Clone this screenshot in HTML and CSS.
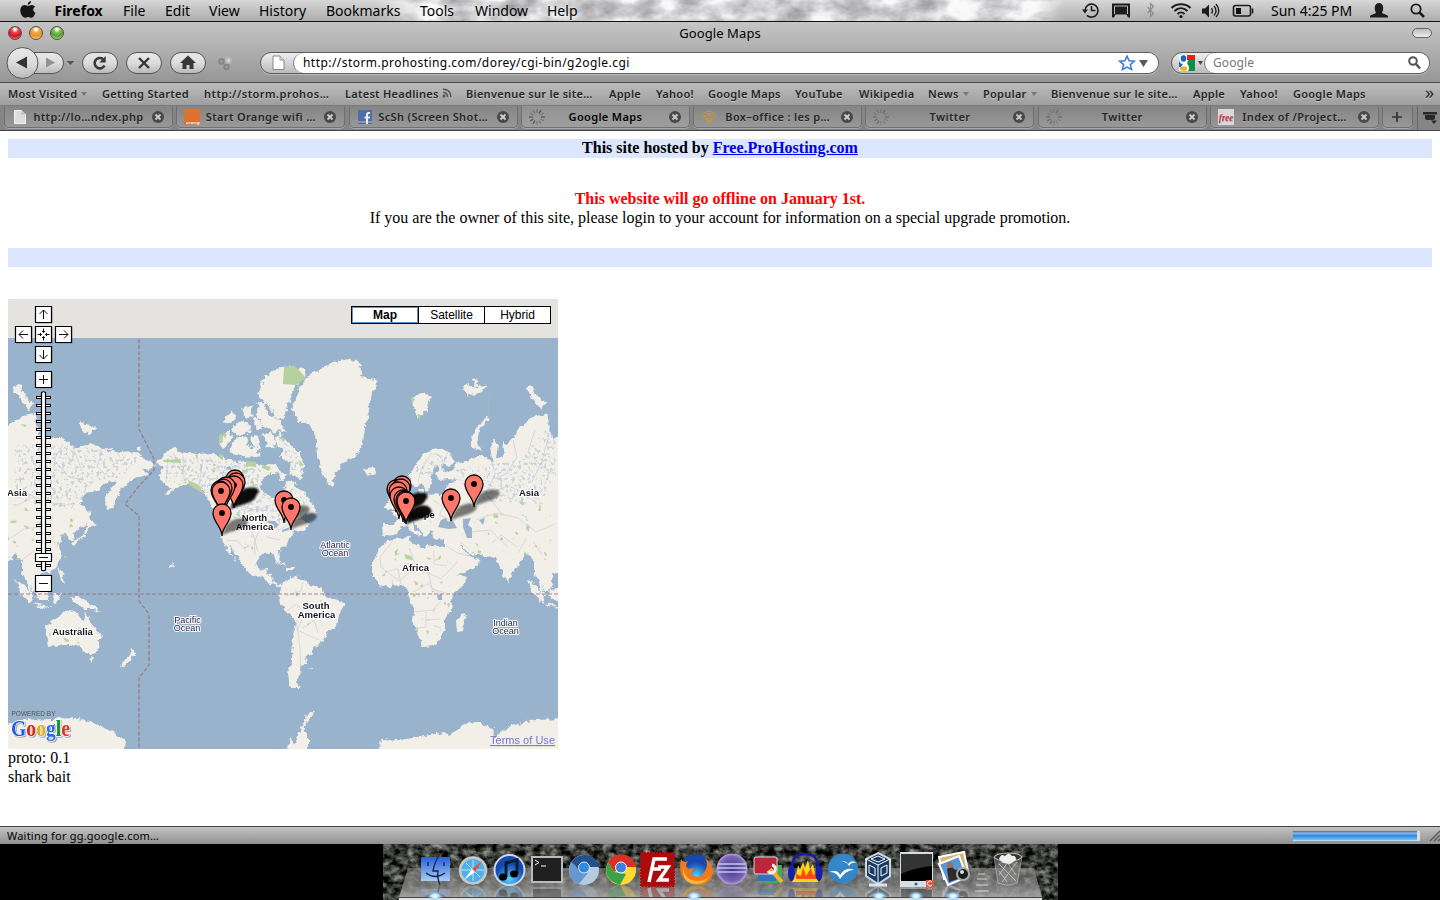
FILE: index.html
```html
<!DOCTYPE html>
<html lang="en">
<head>
<meta charset="utf-8">
<title>Google Maps</title>
<link rel="stylesheet" href="styles.css">
</head>
<body>
<header class="menubar">
  <svg class="clouds" width="690" height="21"><defs><filter id="cloud" x="0" y="0" width="100%" height="100%" color-interpolation-filters="sRGB"><feTurbulence type="fractalNoise" baseFrequency=".03 .05" numOctaves="4" seed="8"/><feColorMatrix values=".8 0 0 0 .45  .8 0 0 0 .45  .8 0 0 0 .46  0 0 0 0 1"/></filter></defs><rect width="690" height="21" filter="url(#cloud)"/></svg>
  <nav class="menus">
    <svg width="18" height="20" viewBox="0 0 18 20"><path d="M12 1c.2 2-1.500 3.800-3.300 3.700C8.500 2.900 10.200 1.200 12 1zM9 6c1 0 2-.9 3.700-.9 1.500 0 2.700.8 3.300 1.700-2.600 1.500-2.200 5 .5 6-.8 2.400-2.400 5-4 5-1.300 0-1.800-.8-3.300-.8s-2 .8-3.200.8C3.800 17.800 1 13.500 1.300 10 1.500 6.800 3.600 5.100 5.600 5.100 7.100 5.100 8.200 6 9 6z" fill="#151515"/></svg>
    <b>Firefox</b><span>File</span><span>Edit</span><span>View</span><span>History</span><span>Bookmarks</span><span>Tools</span><span>Window</span><span>Help</span>
  </nav>
  <div class="extras">
    <svg width="182" height="21" viewBox="1080 0 182 21" fill="none" stroke="#1c1c1c" stroke-width="1.600">
      <path d="M1085 10.500a6.500 6.500 0 1 1 2 4.800M1091.500 6v4.500h4"/><path d="M1082 9.500h6l-3 4z" fill="#1c1c1c" stroke="none"/>
      <path d="M1112 3.500h18v11h-18zM1112 14.500h3.500l-1.500 3h-2zM1130 14.500h-3.500l1.500 3h2z" fill="#1c1c1c" stroke="none"/><path d="M1114.500 6h13" stroke="#bbb" stroke-width="1"/><path d="M1114.500 6v8M1127.500 6v8" stroke="#bbb" stroke-width="1"/>
      <path d="M1147.500 7l6 6.500-3 3v-13l3 3-6 6.500" stroke="#8c8c8c" stroke-width="1.200"/>
      <path d="M1171.500 8c5-5 14-5 19 0M1174.500 11c4-3.600 9-3.600 13 0M1177.500 14c2-2 5-2 7 0" stroke-width="2"/><circle cx="1181" cy="16.500" r="1.600" fill="#111" stroke="none"/>
      <path d="M1202 8.500h3l4-4v13l-4-4h-3z" fill="#1c1c1c" stroke="none"/><path d="M1211.500 8q2 3 0 5.500M1214 6q4 5 0 9.500M1216 4q5.500 7 0 13" stroke-width="1.300"/>
      <rect x="1233.500" y="5.500" width="17" height="10.500" rx="2"/><path d="M1236 8h5v6h-5z" fill="#111" stroke="none"/><path d="M1252.500 8.500v5"/>
    </svg>
    <span class="clock">Sun 4:25 PM</span>
    <svg width="60" height="21" viewBox="0 0 60 21"><path d="M5 16.500c0-2 5-2 6-4C9 10 9 3 14 3s5 7 3 9.500c1 2 6 2 6 4v1H5z" fill="#1c1c1c"/><circle cx="51" cy="9" r="4.700" fill="none" stroke="#1c1c1c" stroke-width="1.800"/><path d="M54.500 12.500l4.500 4.500" stroke="#1c1c1c" stroke-width="2.500"/></svg>
  </div>
</header>

<section class="chrome">
  <div class="titlebar">
    <div class="lights"><i class="red"></i><i class="amber"></i><i class="green"></i></div>
    <span>Google Maps</span><i class="pill"></i>
  </div>
  <div class="toolbar">
    <svg class="nav" width="260" height="36" viewBox="0 45 260 36">
      <defs><linearGradient id="btn" x2="0" y2="1"><stop stop-color="#e8e8e8"/><stop offset=".5" stop-color="#dcdcdc"/><stop offset="1" stop-color="#b8b8b8"/></linearGradient></defs>
      <g fill="url(#btn)" stroke="#555"><path d="M32 52.500h21a10.500 10.500 0 0 1 0 21H32z"/><circle cx="22.500" cy="63" r="15.500"/><rect x="82.500" y="52.500" width="35" height="21" rx="10.500"/><rect x="126.500" y="52.500" width="35" height="21" rx="10.500"/><rect x="170.500" y="52.500" width="35" height="21" rx="10.500"/></g>
      <path d="M16 62.500l11-6v12z" fill="#333"/><path d="M46 57.500l9 5-9 5z" fill="#919191"/><path d="M66.500 61h8l-4 4z" fill="#575757"/>
      <path d="M104.500 65.500a5.200 5.200 0 1 1-1.500-6.500" fill="none" stroke="#383838" stroke-width="2.600"/><path d="M105.700 56v6.500h-6.500z" fill="#383838"/>
      <path d="M139 58l10 10M149 58l-10 10" stroke="#383838" stroke-width="2.400"/>
      <path d="M188 55.500l8 7.500h-2.500v6h-4v-4h-3v4h-4v-6H180z" fill="#383838"/>
      <g fill="none" stroke="#858585" stroke-width="2"><circle cx="221.500" cy="61.500" r="2.200"/><circle cx="226.500" cy="67" r="2.200"/><circle cx="228.500" cy="60.500" r="2.400" fill="#ddd" stroke="#b8b8b8"/></g>
    </svg>
    <div class="address"><svg class="page-icon" width="32" height="20"><path d="M12 3h7l4 4v9.500H12z" fill="#fff" stroke="#888"/><path d="M19 3v4h4" fill="#ddd" stroke="#999"/></svg>
      <div class="field"><span>http://storm.prohosting.com/dorey/cgi-bin/g2ogle.cgi</span><svg width="36" height="20"><path d="M9 3l2.100 4.700 5.200.5-3.900 3.400 1.200 5L9 14l-4.600 2.600 1.200-5L1.700 8.200l5.200-.5z" fill="#f5faff" stroke="#3b78d8" stroke-width="1.500"/><path d="M21 7h9l-4.500 7z" fill="#585858"/></svg></div></div>
    <div class="search"><svg width="32" height="20"><rect x="7" y="2" width="16" height="16" rx="1" fill="#fff"/><path d="M15 2h8v5h-8z" fill="#ee1c1c"/><path d="M16.500 7H23v11h-7c2-3 1-5 0-6s-1-3 .5-5z" fill="#099044"/><path d="M7 7q1 4 4 4l-2 3H7z" fill="#1768c5"/><ellipse cx="11.500" cy="5.500" rx="2.800" ry="3.300" fill="#1768c5"/><ellipse cx="11.500" cy="15.500" rx="3.700" ry="2.300" fill="#f2b31a"/><path d="M26 8h5l-2.500 4z" fill="#444"/></svg>
      <div class="field"><span>Google</span><svg width="18" height="20"><circle cx="7" cy="8" r="3.800" fill="none" stroke="#555" stroke-width="2"/><path d="M10 11l4 4.500" stroke="#555" stroke-width="2.500"/></svg></div></div>
  </div>
  <nav class="bookmarks">
    <span>Most Visited<i class="caret"></i></span><span>Getting Started</span><span class="wide">http://storm.prohos…</span><span>Latest Headlines <svg width="10" height="10" fill="none" stroke="#555" stroke-width="1.500"><circle cx="2" cy="8" r=".8"/><path d="M1 4.500q4.500 0 4.500 4.500M1 1.200q7.800 0 7.800 7.800"/></svg></span><span>Bienvenue sur le site…</span><span>Apple</span><span>Yahoo!</span><span>Google Maps</span><span>YouTube</span><span>Wikipedia</span><span>News<i class="caret"></i></span><span>Popular<i class="caret"></i></span><span>Bienvenue sur le site…</span><span>Apple</span><span>Yahoo!</span><span>Google Maps</span><span class="more">»</span>
  </nav>
  <svg width="0" height="0" class="defs"><defs>
    <symbol id="close" viewBox="0 0 12 12"><circle cx="6" cy="6" r="6" fill="#484848"/><path d="M3.500 3.500l5 5M8.500 3.500l-5 5" stroke="#ccc" stroke-width="1.900"/></symbol>
    <symbol id="spin" viewBox="-8 -8 16 16"><g stroke="#555" stroke-width="1.300"><path d="M0-4v-4M0 4v4" opacity=".5"/><path d="M4 0h4M-4 0h-4" opacity=".8"/><path d="M2-3.500l2-3.400M-2 3.500l-2 3.400M-3.500 2l-3.400 2" /><path d="M3.500-2l3.400-2M3.500 2l3.400 2M2 3.500l2 3.400M-2-3.500l-2-3.400M-3.500-2l-3.400-2" opacity=".5"/></g></symbol>
  </defs></svg>
  <nav class="tabs">
    <div class="tab"><svg class="fav" viewBox="0 0 16 16"><path d="M2.500 1.500h7l4 4v9h-11z" fill="#ddd" stroke="#f2f2f2"/><path d="M9.500 1.500v4h4" fill="#bbb"/></svg><span>http://lo…ndex.php</span><svg class="x"><use href="#close"/></svg></div>
    <div class="tab"><svg class="fav" viewBox="0 0 16 16"><path d="M0 0h16v16H0z" fill="#db7230"/><text x="2" y="14.500" font-size="4" fill="#fff">orange</text></svg><span>Start Orange wifi …</span><svg class="x"><use href="#close"/></svg></div>
    <div class="tab"><svg class="fav" viewBox="0 0 16 16"><path d="M1 1h14v14H1z" fill="#526da4"/><path d="M1 12h14v2H1z" fill="#8397c0"/><path d="M13 4h-1.500q-1.500 0-1.500 2v9M7.500 8.500H13" stroke="#eee" stroke-width="2" fill="none"/></svg><span>ScSh (Screen Shot…</span><svg class="x"><use href="#close"/></svg></div>
    <div class="tab active"><svg class="fav"><use href="#spin"/></svg><span>Google Maps</span><svg class="x"><use href="#close"/></svg></div>
    <div class="tab"><svg class="fav" viewBox="0 0 16 16" fill="none" stroke="#c59543"><ellipse cx="8" cy="7" rx="7" ry="4.500"/><ellipse cx="8" cy="7" rx="4.500" ry="2.500"/><path d="M6 7q2-2 4 0M5 10q3 1 2 4 4-2 3-4" stroke-width="1.500"/></svg><span>Box–office : les p…</span><svg class="x"><use href="#close"/></svg></div>
    <div class="tab"><svg class="fav dim"><use href="#spin"/></svg><span>Twitter</span><svg class="x"><use href="#close"/></svg></div>
    <div class="tab"><svg class="fav dim"><use href="#spin"/></svg><span>Twitter</span><svg class="x"><use href="#close"/></svg></div>
    <div class="tab"><svg class="fav" viewBox="0 0 16 16"><path d="M0 0h16v16H0z" fill="#d8d8d8"/><text class="free" x="1" y="11.500" textLength="14" lengthAdjust="spacingAndGlyphs">free</text></svg><span>Index of /Project…</span><svg class="x"><use href="#close"/></svg></div>
    <div class="tab plus"><svg width="12" height="12"><path d="M6 1v10M1 6h10" stroke="#333" stroke-width="1.700"/></svg></div>
    <div class="all"><svg width="16" height="14"><path d="M1 1h14v2.500H1zM3 4h10v4l-2 1H5l-2-1z" fill="#292929"/><path d="M9 9.500h6l-3 3.500z" fill="#292929"/></svg></div>
  </nav>
</section>

<main class="page">
  <div class="band"><b>This site hosted by <a>Free.ProHosting.com</a></b></div>
  <div class="notice"><b>This website will go offline on January 1st.</b><br>If you are the owner of this site, please login to your account for information on a special upgrade promotion.</div>
  <div class="band"></div>
  <div class="mapbox">
  <svg class="map" width="550" height="450" viewBox="8 299 550 450">
    <defs>
      <filter id="coast" filterUnits="userSpaceOnUse" x="-20" y="330" width="720" height="430"><feTurbulence type="fractalNoise" baseFrequency=".18" numOctaves="3" seed="4"/><feDisplacementMap in="SourceGraphic" scale="6" xChannelSelector="R" yChannelSelector="G"/></filter>
      <filter id="isles" filterUnits="userSpaceOnUse" x="0" y="330" width="570" height="430"><feTurbulence type="fractalNoise" baseFrequency=".22" numOctaves="2" seed="9"/><feDisplacementMap in="SourceGraphic" scale="8" xChannelSelector="R" yChannelSelector="G"/></filter>
      <filter id="lakes" x="0" y="0" width="100%" height="100%" color-interpolation-filters="sRGB"><feTurbulence type="fractalNoise" baseFrequency=".32" numOctaves="2" seed="12"/><feColorMatrix values="0 0 0 0 .66  0 0 0 0 .745  0 0 0 0 .82  9 0 0 0 -4.900"/><feComposite in2="SourceGraphic" operator="in"/></filter>
      <filter id="parks" x="0" y="0" width="100%" height="100%" color-interpolation-filters="sRGB"><feTurbulence type="fractalNoise" baseFrequency=".16" numOctaves="2" seed="31"/><feColorMatrix values="0 0 0 0 .71  0 0 0 0 .82  0 0 0 0 .61  12 0 0 0 -8.100"/><feComposite in2="SourceGraphic" operator="in"/></filter>
      <filter id="soft" x="-50%" y="-50%" width="200%" height="200%"><feGaussianBlur stdDeviation="1.300"/></filter>
      <g id="pin"><path d="M0 0C0-9-9-14-9-23A9 9 0 0 1 9-23C9-14 0-9 0 0Z" fill="#ff776b" stroke="#000" stroke-width="1.300"/><circle cy="-23" r="2.900"/></g>
      <path id="shade" d="M0 0C3-6 2-12 12-16 22-20 31-15 22-9 15-5 7-5 0 0Z" filter="url(#soft)"/>
      <path id="eurasia" d="M382 525L395 525 397 519 391 512 401 510 406 504 412 499 418 497 420 490 423 488 425 495 440 494 446 491 447 484 458 480 448 479 440 480 436 476 440 468 436 466 430 478 431 484 427 491 422 484 417 487 411 484 409 475 414 468 421 456 432 449 441 448 452 455 454 463 448 467 442 464 445 473 452 470 455 465 463 462 475 458 483 455 493 463 490 449 495 438 499 445 497 458 504 457 502 443 507 445 515 436 520 426 535 416 547 414 552 438 572 437 580 443 590 448 604 444 617 449 632 453 647 452 659 459 667 465 662 470 655 468 660 475 650 477 640 483 634 487 627 500 625 508 619 509 617 500 621 490 629 482 624 481 616 484 610 491 597 493 592 503 600 512 600 520 594 528 588 531 585 534 586 540 581 540 578 533 572 535 574 541 570 545 574 555 569 567 562 573 554 573 550 580 553 587 545 591 541 584 547 598 541 592 539 581 534 573 534 561 527 553 522 560 512 573 509 583 506 581 500 567 496 558 488 557 478 554 470 555 462 546 460 546 470 556 480 561 475 568 456 576 450 563 444 552 444 540 433 538 432 530 426 537 420 530 413 521 414 529 421 534 419 538 413 532 407 526 400 528 395 536 383 537Z"/>
      <path id="seasia" d="M16 580L24 585 32 597 31 603 21 594ZM32 603L44 605 52 608 40 607ZM36 590L48 587 48 600 39 600ZM54 593L61 594 56 604 52 598ZM57 567L63 572 65 584 61 580ZM70 596L82 598 96 608 101 613 92 609 84 609 75 602ZM57 560L59 560 58 566ZM89 510L91 521 97 524 89 528 85 537 78 541 74 546 71 543 77 539 84 536 86 524ZM13 387L20 385 25 396 33 403 29 411 23 403Z"/>
      <path id="antarctic" d="M375 755L382 739 400 740 430 735 445 732 448 735 466 724 475 721 490 727 494 728 493 738 510 726 535 720 565 719 587 718 607 724 627 733 637 740 635 755Z"/>
    </defs>
    <rect x="8" y="299" width="550" height="450" fill="#e5e3df"/><rect x="8" y="338" width="550" height="411" fill="#99b3cc"/>
    <g filter="url(#coast)" fill="#f2efe9">
      <use href="#eurasia"/><use href="#eurasia" x="-512"/><use href="#seasia"/><use href="#seasia" x="512"/><use href="#antarctic"/><use href="#antarctic" x="-512"/>
      <path d="M387 540L409 537 412 543 423 548 427 545 445 548 447 557 456 575 467 577 463 585 453 595 451 610 445 620 445 628 440 640 433 646 422 647 417 633 413 622 414 610 409 598 408 588 400 585 383 587 372 575 372 562 380 548ZM465 612L466 617 462 630 458 631 457 620ZM283 582L293 577 307 580 310 585 322 588 325 597 345 602 345 607 339 615 337 627 327 632 320 645 313 647 313 653 307 657 305 663 300 668 302 673 297 678 296 685 300 688 293 688 289 682 288 672 292 660 293 637 295 620 287 613 281 603 279 595 281 588Z"/>
      <path d="M157 463L165 452 173 447 180 451 197 454 213 453 220 457 230 460 245 462 262 465 275 464 280 471 270 473 262 478 260 488 269 496 277 499 279 508 282 500 281 493 285 487 286 480 294 482 300 490 308 496 313 505 317 513 305 514 299 519 310 524 303 530 292 533 287 543 279 551 281 563 277 562 273 553 262 554 256 561 258 570 267 568 266 574 272 575 271 582 281 585 283 587 271 584 261 577 250 574 243 566 234 551 228 545 236 562 228 551 221 537 219 525 217 515 210 503 203 491 190 485 180 485 172 492 162 497 172 488 164 485 158 475 163 468Z"/>
      <path d="M300 385L305 382 312 373 320 370 333 362 350 359 358 362 363 372 360 377 376 379 377 385 372 393 369 410 365 427 363 443 355 457 343 463 335 473 333 486 327 483 322 472 317 453 315 433 308 423 298 422 292 408 295 400ZM363 469L374 467 375 473 367 476ZM45 625L57 618 62 612 70 610 77 612 80 619 84 621 86 610 90 622 101 635 98 648 92 654 83 651 77 645 62 645 48 647 46 635ZM89 657L94 658 92 662ZM130 647L136 653 130 660 121 668 123 662 131 656ZM412 398L422 393 433 396 427 402 429 413 424 410 418 420 414 407ZM492 416L484 424 479 432 477 443 481 451 471 446 471 439 477 427 485 419ZM288 750L290 737 294 745 302 725 306 715 316 711 303 727 308 737 308 750ZM384 505L389 500 387 492 390 487 395 500 396 508 387 510ZM273 561L283 564 287 567 278 563ZM287 567L295 567 295 570 287 570Z"/>
    </g>
    <g filter="url(#isles)" fill="#f2efe9" stroke="#f2efe9" stroke-width=".8"><path d="M259 395L263 380 273 371 284 366 306 370 306 377 296 385 291 397 285 410 284 420 275 417 270 407ZM258 403L265 404 268 414 280 422 286 431 274 431 263 426 257 416ZM222 420L232 412 236 420 227 424ZM232 430L242 420 250 426 250 432 238 435ZM220 440L228 431 232 437 223 449ZM235 439L246 438 249 448 258 447 259 455 241 457 230 451ZM252 436L260 438 258 447 252 444ZM264 435L273 433 276 445 267 448ZM278 433L291 445 300 453 304 468 300 478 290 473 291 462 279 456 285 450 276 443ZM277 472L286 474 282 481ZM243 408L252 405 251 416 243 417ZM254 417L261 424 257 430ZM462 387L467 385 474 388 487 386 479 393 468 395ZM473 380L480 380 477 386ZM79 423L84 423 89 426 96 427 91 434 84 432ZM107 450L112 448 110 452ZM309 668L313 668 311 671ZM138 447L142 447 140 450ZM171 563L174 565 172 566Z"/></g>
    <path d="M165 455L250 464 262 468 258 488 277 504 284 486 298 490 308 509 295 525 240 520 222 515 210 495 190 482 166 482ZM278 437L298 454 302 470 292 470ZM412 470L436 452 448 458 428 478ZM455 470L520 460 545 430 556 440V475L540 505 470 500ZM15 445L80 446 140 458 120 478 95 480 75 510 15 500Z" filter="url(#lakes)" opacity=".55"/>
    <path d="M170 455L250 464 258 490 240 525 270 545 240 555 222 520 200 490 168 482ZM470 505L556 490V560H470ZM8 500H80V560H8ZM390 545L440 550 450 580 440 635 420 635 410 580 375 575ZM285 590L320 590 335 610 310 640ZM48 630L95 625 92 645 50 640Z" filter="url(#parks)" opacity=".9"/>
    <g fill="#99b3cc"><path d="M463 519L471 518 468 525 472 528 472 538 467 538 463 527ZM479 520L485 518 483 525ZM438 527L441 520 446 518 448 522 452 519 457 528 449 529 443 528ZM437 595L442 594 442 600 438 600ZM266 521L275 521 279 525 274 529 271 524ZM282 530L290 527 289 530 282 532ZM240 486L248 489 246 491ZM225 468L230 466 232 470Z"/></g>
    <g fill="#b5d29c"><path d="M284 367l10-1 4 3 8 9-10 7-13-1zM163 460l17-1 1 4-17-1zM188 480l11 5 5 9-7-4-8-5zM219 436l3-3 1 9-4 2zM223 433l4 1-2 5zM219 454l4 1v5l-3-1zM195 454l3 1-1 5zM246 461l10 1v5l-10-1zM262 465l9 2-2 4-7-3zM278 436l8 3-3 3zM299 460l5 5-4 1zM404 554l7 2 2 4-7-1zM416 627l2 7v-6zM426 630l3 1-1 4zM432 617l1 4zM447 604l3-1-1 5zM475 543l3 1v3zM368 473l4 0-2 2zM20 424l7 1-2 2zM411 397l4 2-3 6zM417 414l4 1-2 5zM23 525l6 2-2 2z"/></g>
    <g class="detail"><path d="M392 542l-12 15 1 10 18 14 17-14 25 12 16-17M409 548l7 18 12 4 4 19 14 4M413 592l15-8 13 11M413 612l20-2 8-9M426 612v15l-8 1M426 620l14-1M433 625l8 3M434 550v14l13 2M385 572l13-3 3 15M392 580l1 7"/><path d="M224 520h38M257 520l16 4 6 6 18-10M226 540l12 1 8 10M285 596l16-5 2-9M287 611l9-7 9 9 10 10 3 10M296 620l4 28 1 29M305 613l-8 17 11 5 11 5M315 620l-12 8M183 455l1 26 16 10M245 464l-8 33"/><path d="M447 480l5 15 3 10 14 3 3-12 18-3 19-7 28 13M433 500l11 7-5 8 12 5M412 507l15 3 4 13M476 520l20-7 22 5 18 14 19-8M470 532l20-2 18 17M492 543l9-8 16 12M518 553l8-14M460 542l9 7M447 546l10 7 12 3M15 506l19-9 27 9 14-3M8 540l16-11 15-2 10 9 9 11M35 550l-18 14M542 555l-9-14M432 452l-10 16-4 14M448 451l-7 20"/></g>
    <g class="rivers"><path d="M490 455l5 19-9 20 16 20M513 440l4 17-11 17-13 5M535 430l-7 22 12 13-8 17M549 435l-8 30 15 10M38 445l9 29-11 16M63 444l-9 16 15 17 14 3M74 450l8 21M101 453l-4 14 9 8M168 458l-2 24M173 453l14 22M203 460l-4 25M209 457l20 25M226 465l-8 24M229 477l24-9M238 462l5 28M255 488l-8 21M231 505l33 6M271 505l-14 5M287 515l7 10M244 521l9 13 5 18M260 528l-6 15 1 12M280 540l-13-3M297 512l10-12"/></g>
    <g class="dash"><path d="M8 594H558"/><path d="M139 339V429L154 459V470L139 486 125 504 139 516V601L149 614V665L139 678V749"/></g>
    <path d="M488.500 395v22" stroke="#a9b3bd"/>
    <g class="labels"><text x="17" y="495.500">Asia</text><text x="529" y="495.500">Asia</text><text x="254.500" y="521">North</text><text x="254.500" y="530">America</text><text x="418.500" y="517.500">Europe</text><text x="316" y="608.500">South</text><text x="316.500" y="617.500">America</text><text x="415.500" y="570.500">Africa</text><text x="72.500" y="634.500">Australia</text></g>
    <g class="labels sea"><text x="335" y="547.500">Atlantic</text><text x="335" y="555.500">Ocean</text><text x="187.500" y="622.500">Pacific</text><text x="187" y="630.500">Ocean</text><text x="505.500" y="625.500">Indian</text><text x="505.500" y="633.500">Ocean</text></g>
    <g opacity=".5"><use href="#shade" x="222" y="536"/><use href="#shade" x="284" y="523"/><use href="#shade" x="291" y="530"/><use href="#shade" x="451" y="521"/><use href="#shade" x="474" y="507"/></g>
    <g opacity=".95"><use href="#shade" x="233" y="505"/><use href="#shade" x="230" y="510"/><use href="#shade" x="402" y="510"/><use href="#shade" x="399" y="514"/><use href="#shade" x="404" y="523"/><use href="#shade" x="406" y="525"/></g>
    <use href="#pin" x="235" y="502"/><use href="#pin" x="236" y="505"/><use href="#pin" x="234" y="508"/><use href="#pin" x="226" y="509"/><use href="#pin" x="223" y="511"/><use href="#pin" x="220" y="513"/><use href="#pin" x="221" y="514"/><use href="#pin" x="222" y="536"/><use href="#pin" x="284" y="523"/><use href="#pin" x="291" y="530"/>
    <use href="#pin" x="402" y="508"/><use href="#pin" x="396" y="512"/><use href="#pin" x="401" y="511"/><use href="#pin" x="398" y="514"/><use href="#pin" x="399" y="519"/><use href="#pin" x="403" y="522"/><use href="#pin" x="405" y="523"/><use href="#pin" x="406" y="524"/><use href="#pin" x="451" y="521"/><use href="#pin" x="474" y="507"/>
    <g class="shadow"><path d="M36.500 307.500h16v16h-16zM16.500 327.500h16v16h-16zM36.500 327.500h16v16h-16zM56.500 327.500h16v16h-16zM36.500 347.500h16v16h-16zM36.500 372.500h16v16h-16z"/></g>
    <g class="controls"><path d="M35.500 306.500h16v16h-16zM15.500 326.500h16v16h-16zM35.500 326.500h16v16h-16zM55.500 326.500h16v16h-16zM35.500 346.500h16v16h-16zM35.500 371.500h16v16h-16z"/><path class="tickrail" d="M43.500 394v175"/><path class="tickwhite" d="M43.500 394v175"/><path d="M41.500 392.500q2-1.500 4 0v177.500q-2 1.500-4 0z"/><path d="M35.500 553.500h16v8h-16zM35.500 575.500h16v16h-16z"/></g>
    <path class="glyph" d="M43.500 319v-9m-4 4l4-4 4 4M28 334.500h-9m4-4l-4 4 4 4M59 334.500h9m-4-4l4 4-4 4M43.500 350v9m-4-4l4 4 4-4M39 379.500h9M43.500 375v9M39 557.500h9M39 583.500h9M37.500 334.500h4m4 0h4M43.500 328.500v4m0 4v4M40 333l1.500 1.500-1.500 1.500M47 333l-1.500 1.500 1.500 1.500M42 331l1.500 1.500 1.500-1.500M42 338l1.500-1.500 1.500 1.500"/>
    <text class="powered" x="11.500" y="716" textLength="44" lengthAdjust="spacingAndGlyphs">POWERED BY</text>
    <text class="google" x="11" y="735.500" textLength="59" lengthAdjust="spacingAndGlyphs"><tspan fill="#1f5fe0">G</tspan><tspan fill="#d8261a">o</tspan><tspan fill="#e0ae10">o</tspan><tspan fill="#2a6ee0">g</tspan><tspan fill="#14902a">l</tspan><tspan fill="#dc3524">e</tspan></text>
    <text class="terms" x="490" y="744" textLength="65">Terms of Use</text>
  </svg>
  <div class="maptypes"><b>Map</b><span>Satellite</span><span>Hybrid</span></div>
  </div>
  <div class="foot">proto: 0.1<br>shark bait</div>
</main>

<footer class="status"><span>Waiting for gg.google.com…</span><i class="progress"></i><svg width="11" height="12"><path d="M1 11L11 1M5 11l6-6M9 11l2-2" stroke="#555" stroke-width="1.300"/></svg></footer>
<section class="desktop">
<svg width="675" height="56" viewBox="383 844 675 56">
  <defs><filter id="rock" x="0" y="0" width="100%" height="100%" color-interpolation-filters="sRGB"><feTurbulence type="fractalNoise" baseFrequency=".12 .16" numOctaves="4" seed="3"/><feColorMatrix values="1 .2 0 0 -.37  1 .2 0 0 -.36  1 .2 0 0 -.38  0 0 0 0 1"/></filter>
  <radialGradient id="blue" cy=".8"><stop stop-color="#59d4ff"/><stop offset="1" stop-color="#1648ad"/></radialGradient><linearGradient id="finder" x2="0" y2="1"><stop stop-color="#285fd6"/><stop offset="1" stop-color="#a9ccf5"/></linearGradient><radialGradient id="purple"><stop stop-color="#49328a"/><stop offset=".8" stop-color="#7667b1"/><stop offset="1" stop-color="#bc9ce4"/></radialGradient><radialGradient id="lamp"><stop stop-color="#fff"/><stop offset=".4" stop-color="#c8ebff"/><stop offset="1" stop-color="#56b6ff" stop-opacity="0"/></radialGradient>
  <linearGradient id="floor" x2="0" y2="1"><stop stop-color="#999" stop-opacity=".5"/><stop offset=".6" stop-color="#8c8c8c" stop-opacity=".75"/><stop offset="1" stop-color="#aaa" stop-opacity=".9"/></linearGradient>
  <clipPath id="floorclip"><path d="M399 884h643v13H399z"/></clipPath></defs>
  <rect x="383" y="844" width="675" height="56" filter="url(#rock)"/>
  <path d="M408 868H1034L1042 897H399Z" fill="url(#floor)"/><path d="M399 897.500h643" stroke="#444"/><path d="M399 899h643" stroke="#e2e2e2" stroke-width="2"/>
  <g clip-path="url(#floorclip)" opacity=".3"><use href="#apps" transform="matrix(1 0 0 -1 0 1770)"/></g>
  <g id="apps">
    <path d="M421 857h29v24h-29z" fill="url(#finder)"/><path d="M439 855q-5 9-6 16h5q-1 7 2 14M426 873q9 7 19 0M428 862v4M444 862v4" fill="none" stroke="#15274c" stroke-width="1.400"/>
    <circle cx="473" cy="870.500" r="13" fill="#4fb0ea" stroke="#c8c8c8" stroke-width="3"/><circle cx="473" cy="870.500" r="14.700" fill="none" stroke="#555" stroke-width=".6"/><path d="M473 860v21M462 870h22M466 863l14 14" stroke="#d8f2ff" stroke-width=".8"/><path d="M482 861l-7 11-3-3z" fill="#e64d3c"/><path d="M464 880l8-11 3 3z" fill="#fff"/>
    <circle cx="509.500" cy="870" r="15" fill="url(#blue)" stroke="#cbd8ea" stroke-width="2"/><path d="M506 877v-14l11-3v14" fill="none" stroke="#071d36" stroke-width="3"/><ellipse cx="503" cy="877" rx="4" ry="3.500"/><ellipse cx="514" cy="874" rx="4" ry="3.500"/>
    <path d="M532 857h30v25h-30z" fill="#202020" stroke="#bbb" stroke-width="2"/><path d="M535 860l4 2.500-4 2.500M541 866h5" fill="none" stroke="#fff"/>
    <circle cx="584" cy="870" r="15" fill="#b8cbe4"/><path d="M571 863a15 15 0 0 1 28 4h-15l-7 5z" fill="#24508c"/><path d="M571 862q-6 16 8 22l9-11-8-1-5-7z" fill="#6797d1"/><circle cx="584" cy="867.500" r="5.500" fill="#2e8be0" stroke="#dceaff" stroke-width="1"/>
    <circle cx="621" cy="870" r="15" fill="#ffda2f"/><path d="M608 862a15 15 0 0 1 28 5h-15l-7 5z" fill="#dd2e26"/><path d="M608 862q-7 17 12 23l6-11-12-2z" fill="#38a348"/><circle cx="621" cy="867.500" r="5.500" fill="#3785e2" stroke="#fff" stroke-width="1"/>
    <path d="M641 853h33v33h-33z" fill="#ad0c0c" stroke="#ad0c0c" stroke-dasharray="2 1" stroke-width="2"/><path d="M649 882l5-23h13M652 869h9M658 867h10l-9 13h10" fill="none" stroke="#fff" stroke-width="3.500"/>
    <circle cx="696" cy="868" r="14" fill="url(#blue)"/><path d="M681 859q3 5 7 2-4 6 1 8l5-1q-3 5-3 6 8 7 14-3 4-7 0-13 8 6 8 13-1 14-16 14-21-4-16-26z" fill="#ef791e"/><path d="M683 865q0 15 14 16 9 0 12-5-3 8-13 8-15 0-13-19z" fill="#ffb630"/>
    <circle cx="732" cy="869" r="15.500" fill="url(#purple)"/><path d="M718 864h28M717 868h30M718 872h28" stroke="#bfc8ef" stroke-width="1.500"/>
    <path d="M764 865h18v18h-18z" fill="#47a850"/><path d="M758 863h18v18h-18z" fill="#3472bd"/><rect x="754" y="857" width="23" height="17" rx="2" fill="#bb263c" stroke="#d8d8d8"/><path d="M770 869l12 13" stroke="#ffad32" stroke-width="4"/><path d="M772 865a4 4 0 1 1-4 6" fill="none" stroke="#eee" stroke-width="3"/>
    <path d="M793 880v-11l3 7 2-11 2 5 3-8 2 6 3-8 2 9 3-5 2 10 3-7v15h-26z" fill="#ffd918"/><path d="M796 879v-5l5 2 2-9 3 9 5-8 2 7 4-3v7z" fill="#ff4a15"/><path d="M792 870v-2q0-14 13-14t13 14v2" fill="none" stroke="#171ca1" stroke-width="2.500"/><ellipse cx="791.500" cy="873" rx="3.500" ry="8" fill="#1720a4"/><ellipse cx="819" cy="873" rx="3.500" ry="8" fill="#1720a4"/>
    <circle cx="843" cy="868.500" r="15" fill="#3486c7"/><path d="M841 862q5-2 7 2 4-5 8-1-5-1-7 3-3-5-8-4zM829 872q9-3 11 3 6-9 14-5-8 0-14 9-4-8-11-7z" fill="#fff"/>
    <path d="M878 853l12 6v17l-12 8-12-8v-17z" fill="#183b65" stroke="#d0d7df" stroke-width="2"/><path d="M866 859l12 6 12-6M878 865v19M869 865l6 3v8l-6-3zM887 865l-6 3v8l6-3zM871 859l7-3 7 3-7 3z" fill="none" stroke="#fff"/><path d="M869 885h18" stroke="#d5e5f7" stroke-width="3"/>
    <path d="M900 852h33v35h-33z" fill="#d7dde5"/><path d="M901 854h31v27h-31z"/><path d="M901 854h31v12q-15 1-31 8z" fill="#343434"/><circle cx="916" cy="884" r="1.500" fill="#365f98"/><path d="M926 880h8v7h-8z" fill="#d85d3c"/><path d="M932 882a2.500 2.500 0 1 0 0 3" fill="none" stroke="#fff"/>
    <path d="M939 857l25-5 4 19-24 8z" fill="#d4b974" stroke="#fff" stroke-width="2"/><path d="M939 864l20-8 8 21-19 8z" fill="#5995d7" stroke="#fff" stroke-width="2"/><path d="M947 869l4-3 4 4 5-1 4 8-15 5z" fill="#322c28"/><circle cx="950" cy="865" r="3" fill="#9d7254"/><circle cx="963" cy="874" r="6" fill="#171b20" stroke="#aaa" stroke-width="2"/><circle cx="962" cy="872" r="2" fill="#ddd"/>
    <path d="M978 874h7M977 879h10M976 885h12M975 891h14" stroke="#c4c4c4" stroke-width="2" opacity=".6"/>
    <path d="M994 857l4 26q10 4 19 0l5-26z" fill="#878787" opacity=".6" stroke="#c9c9c9"/><path d="M999 864l17 17M1017 862l-15 20M1008 862l-9 13M1007 862l9 13M999 871l8 11" stroke="#ccc" stroke-width=".8"/><ellipse cx="1008" cy="857" rx="13.500" ry="4" fill="#333" stroke="#ccc"/><path d="M999 859q2-6 6-3 4-5 7 0 4-1 4 4l-6 4-7-1z" fill="#eee"/>
  </g>
  <g fill="url(#lamp)"><ellipse cx="435" cy="896" rx="8" ry="5"/><ellipse cx="694" cy="896" rx="8" ry="5"/><ellipse cx="879" cy="896" rx="8" ry="5"/><ellipse cx="916" cy="896" rx="8" ry="5"/><ellipse cx="953" cy="896" rx="8" ry="5"/></g>
</svg>
</section>
</body>
</html>
```
FILE: styles.css
```css
* { box-sizing: border-box; }
body { margin: 0; width: 1440px; height: 900px; overflow: hidden; display: flex; flex-direction: column; background: #000; font-family: "Noto Sans", sans-serif; color: #000; }
svg { display: block; flex: none; }
i { display: block; }
.menubar { height: 22px; position: relative; display: flex; justify-content: space-between; background: linear-gradient(#d7d7d7, #adadad); border-bottom: 1px solid #111; font-size: 14px; line-height: 21px; }
.clouds { position: absolute; left: 375px; top: 0; opacity: .9; -webkit-mask-image: linear-gradient(90deg, transparent, #000 50px, #000 660px, transparent); mask-image: linear-gradient(90deg, transparent, #000 50px, #000 660px, transparent); }
.menus { position: relative; display: grid; grid-template-columns: 35.500px 68.500px 42px 44px 50px 67px 94px 55px 72px 50px; padding-left: 19px; white-space: nowrap; }
.extras { position: relative; display: flex; padding-right: 15px; }
.clock { width: 103px; padding-left: 9px; white-space: nowrap; }
.chrome { height: 109px; flex: none; background: linear-gradient(#c5c5c5, #969696 60px, #969696); border-bottom: 1px solid #444; }
.titlebar { height: 23px; display: grid; grid-template-columns: 1fr auto 1fr; align-items: center; padding: 0 8px; font-size: 13px; }
.titlebar span { margin-top: -2px; letter-spacing: .1px; }
.titlebar .pill, .lights { margin-top: -1px; }
.lights { display: flex; gap: 7px; }
.lights i { width: 14px; height: 14px; border: 1px solid #5f4b45; border-radius: 50%; }
.red { background: radial-gradient(circle at 50% 20%, #fff 0 8%, #ed4953 28%, #d01628 60%, #ff8b8b); }
.amber { background: radial-gradient(circle at 50% 20%, #fff 0 8%, #f0ac50 28%, #e89030 60%, #ffe779); }
.green { background: radial-gradient(circle at 50% 20%, #fff 0 8%, #7cc35c 28%, #55a038 60%, #c4f78b); }
.pill { justify-self: end; width: 20px; height: 10px; border: 1px solid #666; border-radius: 5px; background: linear-gradient(#bbb, #eee); }
.toolbar { height: 38px; display: flex; align-items: center; padding-bottom: 2px; border-bottom: 1px solid #4b4b4b; }
.address, .search { display: flex; height: 22px; border: 1px solid #5b5b5b; border-radius: 11px; background: linear-gradient(#eee, #bbb); box-shadow: 0 1px #bcbcbc; }
.address { width: 899px; }
.search { width: 259px; margin-left: 12px; }
.field { flex: 1; display: flex; justify-content: space-between; background: #fff; border-radius: 10px; padding: 0 5px 0 9px; font-size: 12px; line-height: 20px; border-left: 1px solid #777; }
.address .field { padding: 0 4px 0 9px; }
.address .field span { letter-spacing: .45px; }
.search .field { color: #777; padding-left: 8px; letter-spacing: .1px; }
.bookmarks { height: 22px; display: grid; grid-template-columns: 94px 102px 141px 121px 143px 47px 52px 87px 64px 69px 55px 68px 142px 47px 53px 1fr 10px; padding: 0 5px 0 8px; line-height: 22px; font-size: 11px; font-weight: 600; letter-spacing: .27px; color: #252525; background: linear-gradient(#bcbcbc, #9e9e9e); white-space: nowrap; text-shadow: 0 1px #c7c7c7; }
.bookmarks svg { display: inline-block; }
.bookmarks .wide { letter-spacing: .45px; }
.bookmarks .more { font-size: 18px; font-weight: 400; line-height: 19px; }
.caret { display: inline-block; border: 3px solid transparent; border-top: 4px solid #777; border-bottom: 0; margin: 0 0 2px 4px; }
.defs { position: absolute; }
.tabs { height: 25px; display: grid; grid-template-columns: repeat(8, 169px) 31px 25px; column-gap: 3.300px; padding-left: 4px; background: #858585; border-top: 1px solid #7b7b7b; }
.tab { height: 22px; display: flex; align-items: center; padding: 0 8px 0 7px; font-size: 11px; font-weight: 600; letter-spacing: .35px; color: #252525; border: 1px solid #707070; border-top: 0; border-radius: 0 0 5px 5px; background: linear-gradient(#858585, #989898); box-shadow: 0 1px #aaa; text-shadow: 0 1px #a5a5a5; white-space: nowrap; }
.tab span { flex: 1; text-align: center; padding-right: 3px; }
.active { color: #000; background: linear-gradient(#929292, #9e9e9e); }
.fav { width: 16px; height: 16px; }
.dim { opacity: .65; }
.free { font: italic bold 10px "Liberation Serif", serif; letter-spacing: 0; fill: #c23344; }
.x { width: 12px; height: 12px; }
.plus { justify-content: center; }
.all { border-left: 1px solid #666; padding: 5px 0 0 4px; }
.page { height: 695px; flex: none; background: #fff; padding: 8px; font: 16px/19px "Liberation Serif", serif; }
.band { height: 19px; background: #dce6ff; text-align: center; line-height: 17px; }
.band a { color: #0000e8; text-decoration: underline; }
.notice { height: 90px; padding-top: 31px; text-align: center; }
.notice b { color: #f00; }
.mapbox { position: relative; width: 550px; height: 450px; margin-top: 32px; }
.foot { margin-top: -1px; }
.maptypes { position: absolute; right: 7px; top: 7px; width: 200px; height: 18px; display: grid; grid-template-columns: 66px 66px 66px; border: 1px solid #000; background: #fff; font: 12px/16px "Liberation Sans", sans-serif; text-align: center; }
.maptypes b { border: 1px solid #638fcb; line-height: 14px; }
.maptypes span { border-left: 1px solid #000; }
.detail, .rivers { fill: none; stroke: #bbb8b5; stroke-width: .6; opacity: .7; }
.rivers { stroke: #a8bfd3; stroke-width: .7; }
.dash { fill: none; stroke: #986a78; stroke-width: 1.200; stroke-dasharray: 4 2; opacity: .8; }
.labels { font: bold 9.500px "Liberation Sans", sans-serif; fill: #151520; stroke: #fff; stroke-width: 2.500px; paint-order: stroke; stroke-linejoin: round; text-anchor: middle; }
.sea { font-size: 9px; font-weight: normal; fill: #1c1c4c; stroke-width: 2px; }
.shadow { fill: #333; opacity: .35; }
.controls { fill: #fff; stroke: #000; stroke-width: 1.200; }
.controls .tickrail { stroke-width: 15; stroke-dasharray: 3 5; stroke-dashoffset: -2; }
.controls .tickwhite { stroke: #fff; stroke-width: 13; stroke-dasharray: 1 7; stroke-dashoffset: -3; }
.glyph { fill: none; stroke: #111; stroke-width: 1; }
.powered { font: 7px "Liberation Sans", sans-serif; fill: #555; }
.google { font: 23px "Liberation Serif", serif; stroke: #fff; stroke-width: 1.500px; paint-order: stroke; filter: drop-shadow(1px 1px 0 #60708088); }
.google tspan { font-weight: bold; }
.terms { font: 11px "Liberation Sans", sans-serif; fill: #7777cc; text-decoration: underline; }
.status { height: 18px; flex: none; display: flex; align-items: center; padding: 0 0 0 7px; font-size: 11px; letter-spacing: .22px; border-top: 1px solid #444; background: linear-gradient(#c2c2c2, #919191); }
.status span { flex: 1; margin-top: -1px; }
.progress { width: 127px; height: 10px; margin: 0 9px 0 0; border-right: 3px solid #ddd; background: linear-gradient(#346eb3, #8bbced 22%, #3485df 47%, #78c2fb 90%, #dff); }
.desktop { height: 56px; background: #000; display: flex; justify-content: center; }
```
